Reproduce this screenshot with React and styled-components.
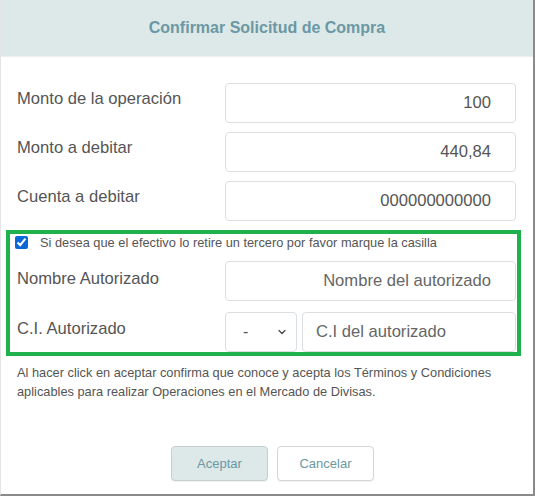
import React from 'react';
import styled, { createGlobalStyle } from 'styled-components';
import { ChevronDown } from 'lucide-react';

const GlobalStyle = createGlobalStyle`
  body {
    margin: 0;
    background: #fff;
    font-family: "Liberation Sans", Arial, sans-serif;
  }
`;

const Panel = styled.div`
  width: 535px;
  height: 496px;
  box-sizing: border-box;
  border-left: 1px solid #e4e4e4;
  border-right: 2px solid #8a8a8a;
  border-bottom: 2px solid #8a8a8a;
  display: flex;
  flex-direction: column;
  background: #fff;
`;

const Header = styled.div`
  height: 56px;
  background: #dde8e8;
  border-bottom: 1px solid #eceff0;
  display: flex;
  align-items: center;
  justify-content: center;
  color: #6a98a4;
  font-size: 16px;
  font-weight: bold;
  flex-shrink: 0;
`;

const Body = styled.div`
  flex: 1;
  padding: 26px 17px 0 16px;
  display: flex;
  flex-direction: column;
`;

const Row = styled.div`
  display: grid;
  grid-template-columns: 208px 1fr;
  height: 40px;
  margin-bottom: ${p => p.$gap ?? 9}px;
`;

const Label = styled.div`
  font-size: 16.6px;
  line-height: 20px;
  color: #555;
  padding-top: ${p => p.$top ?? 6}px;
`;

const Field = styled.div`
  box-sizing: border-box;
  height: 40px;
  border: 1px solid #dcdfe2;
  border-radius: 4px;
  display: flex;
  align-items: center;
  justify-content: ${p => (p.$left ? 'flex-start' : 'flex-end')};
  padding: 0 ${p => (p.$left ? 0 : 24)}px 0 ${p => (p.$left ? 13 : 0)}px;
  font-size: 16.6px;
  color: ${p => (p.$placeholder ? '#666' : '#555')};
  background: #fff;
  flex: 1;
`;

const Split = styled.div`
  display: flex;
  gap: 5px;
`;

const Select = styled.div`
  box-sizing: border-box;
  width: 72px;
  height: 40px;
  border: 1px solid #dcdfe2;
  border-radius: 4px;
  display: flex;
  align-items: center;
  justify-content: space-between;
  padding: 0 8px 0 17px;
  font-size: 16px;
  color: #555;
`;

const Highlight = styled.div`
  margin: 0 -5px 0 -11px;
  border: 4px solid #1fb14b;
  padding: 0 1px 0 7px;
  overflow: hidden;
`;

const CheckRow = styled.label`
  display: flex;
  align-items: center;
  gap: 12px;
  height: 14px;
  margin: 1px 0 12px 0;
  font-size: 12.8px;
  color: #555;

  input {
    margin: 0 0 0 -2px;
    width: 13px;
    height: 13px;
    accent-color: #0b68d9;
  }
`;

const Terms = styled.p`
  margin: 7px 0 0 0;
  font-size: 12.8px;
  line-height: 19px;
  color: #555;
`;

const Footer = styled.div`
  display: flex;
  justify-content: center;
  gap: 9px;
  padding: 0 0 13px 11px;
`;

const Button = styled.button`
  width: 97px;
  height: 35px;
  border-radius: 4px;
  border: 1px solid ${p => (p.$primary ? '#c4d0d0' : '#d3d6d8')};
  background: ${p => (p.$primary ? '#dde8e8' : '#fff')};
  color: #6a98a4;
  font-family: "Liberation Sans", Arial, sans-serif;
  font-size: 13px;
  box-shadow: 0 1px 1px rgba(0, 0, 0, 0.06);
`;

export default function App() {
  return (
    <>
      <GlobalStyle />
      <Panel>
        <Header>Confirmar Solicitud de Compra</Header>
        <Body>
          <Row>
            <Label>Monto de la operación</Label>
            <Field>100</Field>
          </Row>
          <Row>
            <Label>Monto a debitar</Label>
            <Field>440,84</Field>
          </Row>
          <Row>
            <Label>Cuenta a debitar</Label>
            <Field>000000000000</Field>
          </Row>
          <Highlight>
            <CheckRow>
              <input type="checkbox" defaultChecked />
              Si desea que el efectivo lo retire un tercero por favor marque la casilla
            </CheckRow>
            <Row $gap={11}>
              <Label $top={8}>Nombre Autorizado</Label>
              <Field $placeholder>Nombre del autorizado</Field>
            </Row>
            <Row $gap={0}>
              <Label $top={7}>C.I. Autorizado</Label>
              <Split>
                <Select>
                  -
                  <ChevronDown size={12} strokeWidth={2.4} color="#444" />
                </Select>
                <Field $left $placeholder>C.I del autorizado</Field>
              </Split>
            </Row>
          </Highlight>
          <Terms>
            Al hacer click en aceptar confirma que conoce y acepta los Términos y Condiciones
            aplicables para realizar Operaciones en el Mercado de Divisas.
          </Terms>
        </Body>
        <Footer>
          <Button $primary>Aceptar</Button>
          <Button>Cancelar</Button>
        </Footer>
      </Panel>
    </>
  );
}
